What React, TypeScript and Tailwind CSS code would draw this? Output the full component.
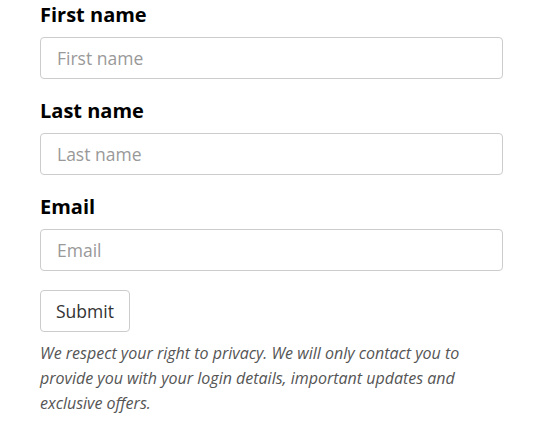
export default function App() {
  const fields = [
    { id: "first", label: "First name" },
    { id: "last", label: "Last name" },
    { id: "email", label: "Email" },
  ];

  return (
    <div className="min-h-screen bg-white px-[40px] pt-[1px] font-['Open_Sans',sans-serif] text-black">
      <form className="w-[463px]" onSubmit={(e) => e.preventDefault()}>
        {fields.map((f) => (
          <div key={f.id} className="mb-[18px]">
            <label htmlFor={f.id} className="mb-[8px] block text-[20px] font-bold leading-[28px]">
              {f.label}
            </label>
            <input
              id={f.id}
              placeholder={f.label}
              className="block h-[42px] w-full rounded-[4px] border border-[#cccccc] px-[16px] text-[17.5px] placeholder:text-[#999999] focus:outline-none"
            />
          </div>
        ))}
        <button
          type="submit"
          className="mt-[1px] h-[42px] rounded-[4px] border border-[#cccccc] bg-white px-[15px] text-[17.5px] text-[#333333]"
        >
          Submit
        </button>
        <p className="mt-[9px] text-[16px] italic leading-[25px] text-[#555555]">
          We respect your right to privacy. We will only contact you to provide you with your login
          details, important updates and exclusive offers.
        </p>
      </form>
    </div>
  );
}
